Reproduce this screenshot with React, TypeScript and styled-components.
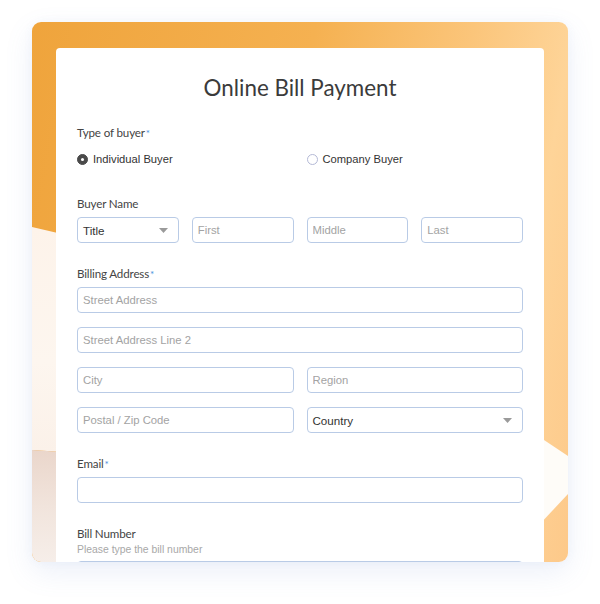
import React from 'react';
import styled, { createGlobalStyle } from 'styled-components';

const GlobalStyle = createGlobalStyle`
  html, body {
    margin: 0;
    padding: 0;
    background: #ffffff;
  }
  body {
    width: 600px;
    height: 604px;
    overflow: hidden;
  }
`;

const Page = styled.div`
  padding: 22px 32px 42px;
`;

const Frame = styled.div`
  position: relative;
  box-sizing: border-box;
  height: 540px;
  border-radius: 9px;
  overflow: hidden;
  background: linear-gradient(100deg, #efa43c 0%, #f5b151 45%, #fbc57a 70%, #fed498 86%, #fdc98a 100%);
  box-shadow: 0 10px 28px rgba(110, 140, 210, 0.13), 0 0 10px rgba(110, 140, 210, 0.06);
  padding: 26px 24px 0;
`;

const Backdrop = styled.svg`
  position: absolute;
  inset: 0;
  width: 100%;
  height: 100%;
`;

const Card = styled.div`
  position: relative;
  background: #ffffff;
  border-radius: 4px 4px 0 0;
  padding: 25px 21px 0;
  height: 560px;
  font-family: Lato, 'Noto Sans', sans-serif;
`;

const Title = styled.h1`
  margin: 0 0 22px;
  text-align: center;
  font-family: Lato, 'Noto Sans', sans-serif;
  font-weight: 400;
  font-size: 22.4px;
  line-height: 30px;
  color: #3b3b3b;
`;

const Field = styled.div`
  margin-bottom: 23px;
`;

const Label = styled.div`
  font-size: 11.6px;
  letter-spacing: -0.15px;
  line-height: 16px;
  color: #444444;
  margin-bottom: 5px;
`;

const Required = styled.span`
  color: #4a8fdc;
  font-size: 10px;
  vertical-align: top;
  margin-left: 1px;
`;

const Hint = styled.div`
  font-family: 'Liberation Sans', Arial, sans-serif;
  font-size: 10.4px;
  line-height: 14px;
  color: #a8a8a8;
  margin-top: -4px;
  margin-bottom: 4px;
`;

const Grid = styled.div<{ $cols: number }>`
  display: grid;
  grid-template-columns: repeat(${p => p.$cols}, 1fr);
  column-gap: 13px;
  row-gap: 14px;
`;

const Stack = styled.div`
  display: flex;
  flex-direction: column;
  gap: 14px;
`;

const Input = styled.input`
  box-sizing: border-box;
  width: 100%;
  height: 26px;
  border: 1px solid #b9cbe6;
  border-radius: 4px;
  padding: 0 5px;
  font-family: 'Liberation Sans', Arial, sans-serif;
  font-size: 11.3px;
  color: #333;
  background: #fff;
  outline: none;

  &::placeholder {
    color: #a3a3a3;
  }
`;

const SelectBox = styled.div`
  box-sizing: border-box;
  height: 26px;
  border: 1px solid #b9cbe6;
  border-radius: 4px;
  padding: 0 10px 0 5px;
  display: flex;
  align-items: center;
  justify-content: space-between;
  font-family: 'Liberation Sans', Arial, sans-serif;
  font-size: 11.6px;
  color: #333;
`;

const RadioRow = styled.div`
  display: grid;
  grid-template-columns: 1fr 1fr;
  column-gap: 13px;
  height: 20px;
  align-items: center;
  margin-top: 8px;
  margin-bottom: 27px;
`;

const RadioOption = styled.label`
  display: flex;
  align-items: center;
  gap: 5px;
  padding-left: 0;
  font-family: 'Liberation Sans', Arial, sans-serif;
  font-size: 11.2px;
  color: #333;
`;

const RadioDot = styled.span<{ $checked?: boolean }>`
  box-sizing: border-box;
  width: 11px;
  height: 11px;
  border-radius: 50%;
  border: 1px solid ${p => (p.$checked ? '#4a4a4a' : '#b4b9d6')};
  background: ${p => (p.$checked ? '#4a4a4a' : '#fff')};
  display: flex;
  align-items: center;
  justify-content: center;

  &::after {
    content: '';
    width: 3px;
    height: 3px;
    border-radius: 50%;
    background: ${p => (p.$checked ? '#fff' : 'transparent')};
  }
`;

const Caret = () => (
  <svg width="9" height="5" viewBox="0 0 9 5">
    <path d="M0 0 L9 0 L4.5 5 Z" fill="#9a9a9a" />
  </svg>
);

const Select: React.FC<{ value: string }> = ({ value }) => (
  <SelectBox>
    <span>{value}</span>
    <Caret />
  </SelectBox>
);

export default function App() {
  return (
    <>
      <GlobalStyle />
      <Page>
        <Frame>
          <Backdrop viewBox="0 0 536 540" preserveAspectRatio="none">
            <defs>
              <linearGradient id="cream" x1="0" y1="0" x2="0" y2="1">
                <stop offset="0" stopColor="#fdf3ea" />
                <stop offset="0.6" stopColor="#fdf6ef" />
                <stop offset="1" stopColor="#fbf1e9" />
              </linearGradient>
              <linearGradient id="blush" x1="0" y1="0" x2="0" y2="1">
                <stop offset="0" stopColor="#ead6cb" />
                <stop offset="0.5" stopColor="#f1e4dc" />
                <stop offset="1" stopColor="#f6eee9" />
              </linearGradient>
            </defs>
            <polygon points="0,205 30,212 30,430 0,428" fill="url(#cream)" />
            <polygon points="0,428 30,430 30,540 0,540" fill="url(#blush)" />
            <polygon points="506,414 536,434 536,472 506,504" fill="#fefcf8" />
          </Backdrop>
          <Card>
            <Title>Online Bill Payment</Title>

            <Label>
              Type of buyer<Required>*</Required>
            </Label>
            <RadioRow>
              <RadioOption>
                <RadioDot $checked />
                Individual Buyer
              </RadioOption>
              <RadioOption>
                <RadioDot />
                Company Buyer
              </RadioOption>
            </RadioRow>

            <Field>
              <Label>Buyer Name</Label>
              <Grid $cols={4}>
                <Select value="Title" />
                <Input placeholder="First" />
                <Input placeholder="Middle" />
                <Input placeholder="Last" />
              </Grid>
            </Field>

            <Field>
              <Label>
                Billing Address<Required>*</Required>
              </Label>
              <Stack>
                <Input placeholder="Street Address" />
                <Input placeholder="Street Address Line 2" />
                <Grid $cols={2}>
                  <Input placeholder="City" />
                  <Input placeholder="Region" />
                  <Input placeholder="Postal / Zip Code" />
                  <Select value="Country" />
                </Grid>
              </Stack>
            </Field>

            <Field>
              <Label>
                Email<Required>*</Required>
              </Label>
              <Input />
            </Field>

            <Field>
              <Label>Bill Number</Label>
              <Hint>Please type the bill number</Hint>
              <Input />
            </Field>
          </Card>
        </Frame>
      </Page>
    </>
  );
}
